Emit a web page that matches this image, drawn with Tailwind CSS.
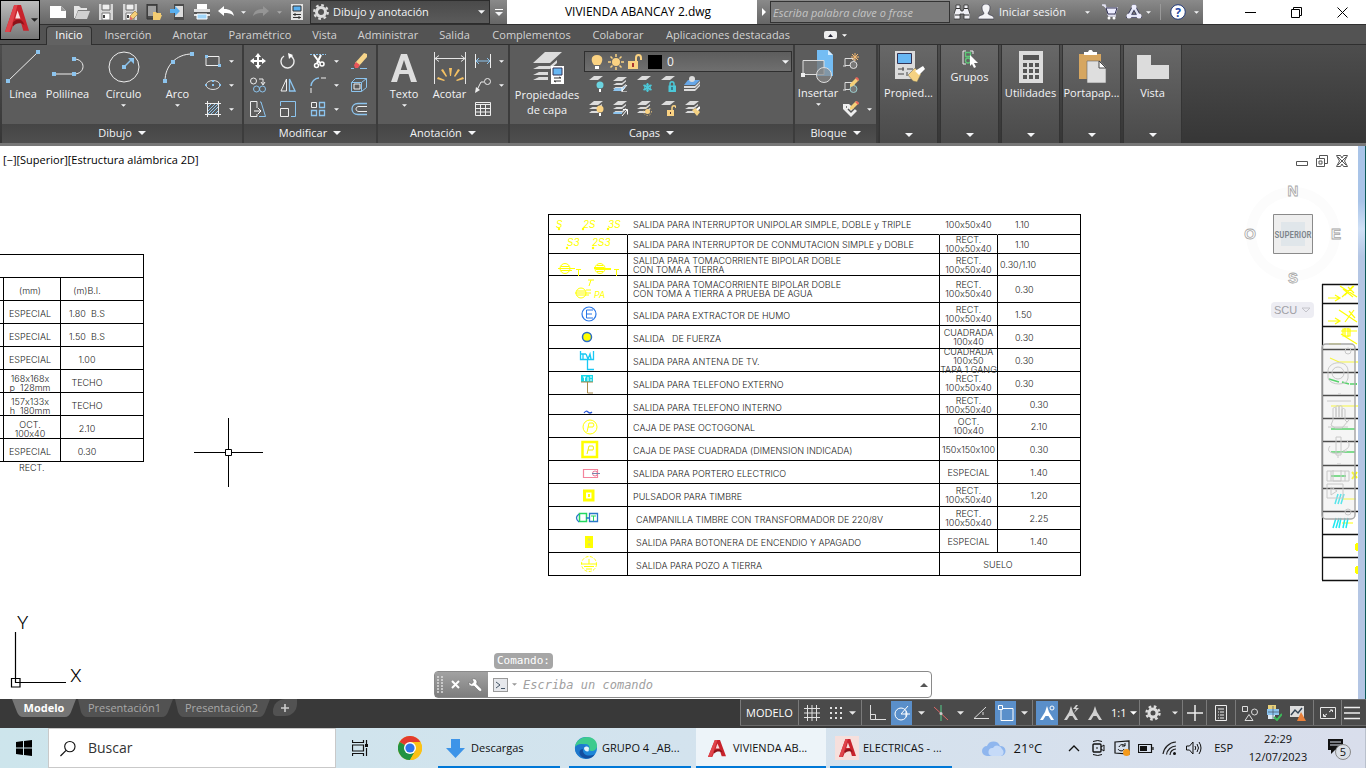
<!DOCTYPE html>
<html lang="es">

<head>
  <meta charset="UTF-8">
  <meta name="viewport" content="width=device-width, initial-scale=1.0">
  <title>VIVIENDA ABANCAY 2.dwg</title>
  <script src="https://cdn.jsdelivr.net/npm/@tailwindcss/browser@4"></script>
</head>

<body class="h-screen flex flex-col overflow-hidden bg-white font-['Open_Sans','Noto_Sans',sans-serif] text-[11px] leading-4 text-gray-100">

  <!-- Shared icon shapes -->
  <svg class="hidden">
    <symbol id="caret" viewBox="0 0 8 4"><path d="M0 0h8l-4 4z" fill="currentColor" /></symbol>
    <symbol id="layers" viewBox="0 0 16 16"><path d="M6 1h9l-5 4H1zM4.500 7H10l4-3v1.500L10 9H1zM3.500 11H10l4-3v1.500L10 13H1z" fill="#dcdcdc" /></symbol>
    <symbol id="layer" viewBox="0 0 16 16"><path d="M6 2h9l-5 4H1z" fill="#dcdcdc" /></symbol>
    <symbol id="acad" viewBox="1 2 21 20" preserveAspectRatio="none"><path d="M9 2h6l7 19h-5l-2-6H9l-3 7H1z" fill="#c8232c" /><path d="M12 6l2.500 6H10z" fill="#f7dede" /><path d="M9 2h3L8 14l-3 8H1z" fill="#e0444b" /><path d="M8 15c3-3 7-3 9 0l1 2c-3-2-7-2-10 1z" fill="#8e1219" /></symbol>
    <symbol id="floppy" viewBox="0 0 16 16"><path d="M1 0h14v16H1z" fill="#d6d6d6" /><path d="M4 0h8v6H4z" fill="#eee" stroke="#666" /><path d="M4 9h8v7H4z" fill="#fff" stroke="#777" /><path d="M5 11h2v3H5z" fill="#444" /></symbol>
    <symbol id="compass" viewBox="0 0 16 16"><path d="M8 1L10 7l5 8h-3L9.500 11H6.500L4 15H1l5-8z" fill="currentColor" /></symbol>
  </svg>

  <!-- Title bar -->
  <header class="relative flex h-6 shrink-0 bg-gradient-to-b from-[#8a8a8a] to-[#666]">
    <button class="absolute left-0 top-0 z-10 flex h-10 w-10 items-center gap-[2px] border border-black bg-gradient-to-b from-[#bdbdbd] to-[#777] pb-1 pl-1" aria-label="Menú de aplicación">
      <svg class="h-[27px] w-6"><use href="#acad" /></svg>
      <svg class="mt-1 h-1 w-[7px] text-[#222]"><use href="#caret" /></svg>
    </button>

    <div class="flex w-[310px] shrink-0 items-center pl-[46px]">
      <button class="flex w-6 justify-center" aria-label="Nuevo"><svg class="h-4 w-4" viewBox="0 0 16 16"><path d="M0 2h11l5 5v7H0z" fill="#fff" /><path d="M11 2v5h5z" fill="#999" /></svg></button>
      <button class="flex w-6 justify-center" aria-label="Abrir"><svg class="h-4 w-4" viewBox="0 0 16 16"><path d="M0 2h5l2 2h6v2H4L1 14H0z" fill="#e5e5e5" /><path d="M4 7h12l-3 8H1z" fill="#d0d0d0" /></svg></button>
      <button class="flex w-6 justify-center" aria-label="Guardar"><svg class="h-4 w-4"><use href="#floppy" /></svg></button>
      <button class="flex w-6 justify-center" aria-label="Guardar como"><svg class="h-4 w-4" viewBox="0 0 16 16"><use href="#floppy" /><path d="M8 12l5-5 3 3-5 5-3 1z" fill="#f5cf78" stroke="#7c5a20" stroke-width=".5" /><path d="M8 12l3 3-3 1z" fill="#d66" /></svg></button>
      <button class="flex w-6 justify-center" aria-label="Abrir desde móvil"><svg class="h-4 w-4" viewBox="0 0 16 16"><path d="M1 0h10v15H1z" fill="#4b4b4b" stroke="#333" /><path d="M2 2h8v10H2z" fill="#a0a0a0" /><path d="M7 8h3l1 1h4v2h1l-2 5H7z" fill="#f3cc72" /></svg></button>
      <button class="flex w-6 justify-center" aria-label="Guardar en móvil"><svg class="h-4 w-4" viewBox="0 0 16 16"><path d="M4 0h10v16H4z" fill="#4b4b4b" /><path d="M5 2h8v11H5z" fill="#ddd" /><path d="M0 5h5V2l5 5-5 5V9H0z" fill="#5ab0f0" /></svg></button>
      <button class="flex w-6 justify-center" aria-label="Imprimir"><svg class="h-4 w-4" viewBox="0 0 16 16"><path d="M3 0h10v5H3z" fill="#fff" /><path d="M0 5h16v7H0z" fill="#e2e2e2" /><path d="M0 8h16v2H0z" fill="#555" /><path d="M3 10h10v5H3z" fill="#9fd4f7" stroke="#fff" /></svg></button>
      <button class="flex w-6 justify-center" aria-label="Deshacer"><svg class="h-4 w-4" viewBox="0 0 16 16"><path d="M0 7l6-5v3c6 0 9 2 10 7-3-3-6-3-10-3v3z" fill="#fff" /></svg></button>
      <button class="flex w-[11px] justify-center" aria-label="Historial deshacer"><svg class="h-[3px] w-[5px]"><use href="#caret" /></svg></button>
      <button class="flex w-6 justify-center" aria-label="Rehacer"><svg class="h-4 w-4" viewBox="0 0 16 16"><path d="M16 7l-6-5v3C4 5 1 7 0 12c3-3 6-3 10-3v3z" fill="#959595" /></svg></button>
      <button class="flex w-3 justify-center text-[#aaa]" aria-label="Historial rehacer"><svg class="h-[3px] w-[5px]"><use href="#caret" /></svg></button>
      <button class="flex w-6 justify-center" aria-label="Propiedades"><svg class="h-4 w-4" viewBox="0 0 16 16"><path d="M2 0h12v16H2z" fill="#e3e3e3" /><path d="M4 2h8v5H4z" fill="#5ab0f0" stroke="#333" /><path d="M4 10.500h8M4 13.500h8M6 9v3M10 12v3" stroke="#333" /></svg></button>
    </div>

    <div class="relative flex w-[180px] shrink-0 items-center border border-[#2c2c2c] bg-gradient-to-b from-[#4a4a4a] to-[#5b5b5b]">
      <svg class="ml-[2px] h-4 w-4" viewBox="0 0 16 16"><circle cx="8" cy="8" r="4.500" fill="none" stroke="#ddd" stroke-width="3" /><circle cx="8" cy="8" r="6.800" fill="none" stroke="#ddd" stroke-width="2.200" stroke-dasharray="2.700 2.640" /></svg>
      <select class="h-full flex-1 appearance-none bg-transparent pl-1 outline-none" aria-label="Espacio de trabajo"><option>Dibujo y anotación</option></select>
      <svg class="pointer-events-none absolute right-1 h-1 w-[7px]"><use href="#caret" /></svg>
    </div>
    <button class="flex w-[17px] shrink-0 flex-col items-center justify-center gap-[2px]" aria-label="Personalizar"><span class="h-px w-2 bg-white"></span><svg class="h-1 w-2"><use href="#caret" /></svg></button>

    <h1 class="flex flex-1 items-center justify-center bg-white pl-3 text-xs text-black">VIVIENDA ABANCAY 2.dwg</h1>

    <div class="flex w-[446px] shrink-0 items-center">
      <button class="flex w-[13px] justify-center" aria-label="Contraer"><svg class="h-2 w-1" viewBox="0 0 4 8"><path d="M0 0l4 4-4 4z" fill="#fff" /></svg></button>
      <input class="h-[22px] w-[180px] border border-[#333] bg-[#7b7b7b] px-[2px] italic outline-none placeholder:text-[#c4c4c4]" aria-label="Buscar ayuda" placeholder="Escriba palabra clave o frase">
      <button class="flex w-6 justify-center" aria-label="Buscar"><svg class="h-4 w-4" viewBox="0 0 16 16"><path d="M2 1h4v3l1 3h2l1-3V1h4v3l2 6v5h-6v-5H6v5H0v-5l2-6z" fill="#f0f0f5" stroke="#333" stroke-width=".8" /><path d="M2 4.500h4M10 4.500h4M1 11h5M10 11h5" stroke="#333" /></svg></button>
      <button class="flex flex-1 items-center gap-[5px] pl-1" aria-label="Iniciar sesión">
        <svg class="h-4 w-4" viewBox="0 0 16 16"><path d="M8 0c6 0 4 7 2 9 0 3 6 1 6 6H0c0-5 6-3 6-6-2-2-4-9 2-9z" fill="#f3f3f6" stroke="#334" stroke-width=".6" /></svg>
        <span class="whitespace-nowrap">Iniciar sesión</span>
      </button>
      <svg class="mr-3 h-[3px] w-[5px]"><use href="#caret" /></svg>
      <button aria-label="Tienda"><svg class="h-4 w-4" viewBox="0 0 16 16"><path d="M0 1h3l1 3h11l-2 6H6l1 2h7" fill="#e8eaf5" stroke="#dde" stroke-width="1.500" /><path d="M4 4h11l-2 6H6z" fill="#eef" stroke="#335" /><circle cx="7" cy="14" r="1.500" fill="#fff" /><circle cx="12" cy="14" r="1.500" fill="#fff" /></svg></button>
      <button class="ml-2 flex items-center gap-1" aria-label="Autodesk App"><svg class="h-4 w-4" viewBox="0 0 16 16"><path d="M8 3L3 12h10z" fill="none" stroke="#335" stroke-width="4" /><path d="M8 3L3 12h10z" fill="none" stroke="#dfe3f2" stroke-width="2.500" /><circle cx="8" cy="3" r="2.500" fill="#eef" /><circle cx="3" cy="12" r="2.500" fill="#eef" /><circle cx="13" cy="12" r="2.500" fill="#eef" /></svg><svg class="h-[3px] w-[5px]"><use href="#caret" /></svg></button>
      <span class="mx-[9px] h-4 w-px bg-[#999]"></span>
      <button class="flex items-center gap-2 pr-1" aria-label="Ayuda"><svg class="h-4 w-4" viewBox="0 0 16 16"><circle cx="8" cy="8" r="7.300" fill="#fff" stroke="#223a7a" /><text x="8" y="12.500" text-anchor="middle" font-size="12" font-weight="700" fill="#2348a8">?</text></svg><svg class="h-[3px] w-[5px]"><use href="#caret" /></svg></button>
    </div>

    <div class="flex w-[163px] shrink-0 items-center bg-white pl-6 text-black">
      <button class="flex w-[46px] justify-center" aria-label="Minimizar"><svg class="h-[11px] w-[11px]" viewBox="0 0 11 11"><path d="M0 5.500h11" stroke="#000" /></svg></button>
      <button class="flex w-[46px] justify-center" aria-label="Restaurar"><svg class="h-[11px] w-[11px]" viewBox="0 0 11 11"><path d="M.5 2.500h8v8h-8zM2.500 2.500v-2h8v8h-2" fill="none" stroke="#000" /></svg></button>
      <button class="flex w-[46px] justify-center" aria-label="Cerrar"><svg class="h-[11px] w-[11px]" viewBox="0 0 11 11"><path d="M.5.5l10 10M10.500.5l-10 10" stroke="#000" /></svg></button>
    </div>
  </header>

  <!-- Ribbon tabs -->
  <nav class="flex h-[21px] shrink-0 items-end border-b border-t border-[#2f2f2f] bg-[#535353] pl-[46px] leading-[18px] text-[#d2d2d2]">
    <button class="-mb-px h-[19px] w-[46px] rounded-t-sm border border-b-0 border-[#2f2f2f] bg-[#626262] pb-[2px] leading-4 text-white">Inicio</button>
    <button class="w-[72px]">Inserción</button>
    <button class="w-[52px]">Anotar</button>
    <button class="w-[88px]">Paramétrico</button>
    <button class="w-[41px]">Vista</button>
    <button class="w-[86px]">Administrar</button>
    <button class="w-[47px]">Salida</button>
    <button class="w-[107px]">Complementos</button>
    <button class="w-[66px]">Colaborar</button>
    <button class="w-[154px]">Aplicaciones destacadas</button>
    <button class="ml-[19px] flex h-[18px] items-center gap-[5px]" aria-label="Minimizar cinta">
      <svg class="h-2 w-[13px]" viewBox="0 0 13 8"><rect width="13" height="8" rx="2" fill="#eee" /><path d="M4 6l2.500-3L9 6z" fill="#223" /></svg>
      <svg class="h-[3px] w-[5px] text-white"><use href="#caret" /></svg>
    </button>
  </nav>

  <!-- Ribbon panels -->
  <div class="flex h-[101px] shrink-0 border-b-[3px] border-[#777] bg-gradient-to-b from-[#4d4d4d] to-[#363636] pl-[2px]">

    <section class="flex w-[242px] flex-col border-r-2 border-[#3c3c3c] bg-[#5c5c5c]">
      <div class="flex flex-1 pl-[5px] pt-1">
        <button class="flex w-8 flex-col items-center"><svg class="mb-px h-9 w-9 shrink-0" viewBox="0 0 36 36"><path d="M3 32L33 3" stroke="#eee" /><path d="M1 30h4v4H1zM31 1h4v4h-4z" fill="#8cc4ee" /></svg>Línea</button>
        <button class="flex w-[57px] flex-col items-center"><svg class="mb-px h-9 w-9 shrink-0" viewBox="0 0 36 36"><path d="M4 25h20c12 0 12-15 0-15" fill="none" stroke="#eee" /><path d="M2 23h4v4H2zM22 23h4v4h-4zM22 8h4v4h-4z" fill="#8cc4ee" /></svg>Polilínea</button>
        <button class="flex w-[55px] flex-col items-center"><svg class="mb-px h-9 w-9 shrink-0" viewBox="0 0 36 36"><circle cx="18" cy="18" r="15" fill="none" stroke="#eee" /><path d="M18 18l8-8" stroke="#8cc4ee" stroke-width="1.500" /><path d="M22 9h6v6zM16 16h4v4h-4z" fill="#8cc4ee" /></svg>Círculo<svg class="mt-[2px] h-[3px] w-[5px]"><use href="#caret" /></svg></button>
        <button class="flex w-[53px] flex-col items-center"><svg class="mb-px h-9 w-9 shrink-0" viewBox="0 0 36 36"><path d="M5 32C5 17 16 5 32 5" fill="none" stroke="#eee" /><path d="M3 30h4v4H3zM11 11h4v4h-4zM30 3h4v4h-4z" fill="#8cc4ee" /></svg>Arco<svg class="mt-[2px] h-[3px] w-[5px]"><use href="#caret" /></svg></button>
        <div class="flex flex-col pl-px">
          <button class="flex h-6 items-center gap-2" aria-label="Rectángulo"><svg class="h-4 w-4" viewBox="0 0 16 16"><path d="M1 3.500h13v9H1z" fill="none" stroke="#eee" /><path d="M0 2h3v3H0zM13 11h3v3h-3z" fill="#8cc4ee" /></svg><svg class="h-[3px] w-[5px]"><use href="#caret" /></svg></button>
          <button class="flex h-6 items-center gap-2" aria-label="Elipse"><svg class="h-4 w-4" viewBox="0 0 16 16"><ellipse cx="8" cy="8" rx="7" ry="4.500" fill="none" stroke="#ddd" /><path d="M7 7h2v2H7zM0 7h2v2H0zM14 7h2v2h-2zM7 3h2v2H7z" fill="#8cc4ee" /></svg><svg class="h-[3px] w-[5px]"><use href="#caret" /></svg></button>
          <button class="flex h-6 items-center gap-2" aria-label="Sombreado"><svg class="h-4 w-4" viewBox="0 0 16 16"><path d="M3 6l3-3M3 10l7-7M3 13L13 3M6 13l7-7M10 13l3-3" stroke="#8cc4ee" /><path d="M2.500 0v16M13.500 0v16M0 2.500h16M0 13.500h16" stroke="#eee" /></svg><svg class="h-[3px] w-[5px]"><use href="#caret" /></svg></button>
        </div>
      </div>
      <button class="flex h-[19px] items-center justify-center gap-[6px] bg-gradient-to-b from-[#454545] to-[#4f4f4f] pb-px">Dibujo<svg class="h-1 w-2"><use href="#caret" /></svg></button>
    </section>

    <section class="flex w-[134px] flex-col border-r-2 border-[#3c3c3c] bg-[#5c5c5c]">
      <div class="grid flex-1 grid-cols-[30px_30px_41px_16px] content-start pl-[6px] pt-1">
        <button class="flex h-6 items-center" aria-label="Desplazar"><svg class="h-4 w-4" viewBox="0 0 16 16"><path d="M8 0l3 4H9v3h3V5l4 3-4 3V9H9v3h2l-3 4-3-4h2V9H4v2L0 8l4-3v2h3V4H5z" fill="#fff" /></svg></button>
        <button class="flex h-6 items-center" aria-label="Girar"><svg class="h-4 w-4" viewBox="0 0 16 16"><path d="M10 2.500A6.500 6.500 0 1 1 4 3" fill="none" stroke="#eee" stroke-width="1.400" /><path d="M8 0l5 2-4 4z" fill="#fff" /></svg></button>
        <button class="flex h-6 items-center gap-2" aria-label="Recortar"><svg class="h-4 w-4" viewBox="0 0 16 16"><path d="M0 1.500h16" stroke="#8cc4ee" stroke-dasharray="2 1" /><path d="M4 2l6 8M11 2L7 10" stroke="#fff" stroke-width="2" /><circle cx="6.500" cy="12.500" r="2" fill="none" stroke="#fff" stroke-width="1.500" /><circle cx="12" cy="11" r="2" fill="none" stroke="#fff" stroke-width="1.500" /></svg><svg class="h-[3px] w-[5px]"><use href="#caret" /></svg></button>
        <button class="flex h-6 items-center" aria-label="Borrar"><svg class="h-4 w-4" viewBox="0 0 16 16"><path d="M0 15.500h3M9 15.500h7" stroke="#8cc4ee" /><path d="M13 0l3 1v3l-8 9-4-3z" fill="#f7d58a" /><path d="M5 9l4 3-2 3H4l-1-3z" fill="#e8555a" /></svg></button>
        <button class="flex h-6 items-center" aria-label="Copiar"><svg class="h-4 w-4" viewBox="0 0 16 16"><circle cx="3.500" cy="4" r="3" fill="none" stroke="#eee" /><path d="M9 2h4v5M11 5l2 3 2-3" fill="none" stroke="#eee" /><circle cx="6.500" cy="12" r="3" fill="none" stroke="#8cc4ee" /><circle cx="12.500" cy="12" r="3" fill="none" stroke="#8cc4ee" /></svg></button>
        <button class="flex h-6 items-center" aria-label="Simetría"><svg class="h-4 w-4" viewBox="0 0 16 16"><path d="M6.500 2v12H1z" fill="none" stroke="#eee" /><path d="M9.500 2v12H15z" fill="none" stroke="#8cc4ee" stroke-width="1.300" /></svg></button>
        <button class="flex h-6 items-center gap-2" aria-label="Empalme"><svg class="h-4 w-4" viewBox="0 0 16 16"><path d="M1 16v-5M11 1h5" stroke="#eee" /><path d="M1 9c0-4 4-8 8-8" fill="none" stroke="#8cc4ee" stroke-width="1.400" /></svg><svg class="h-[3px] w-[5px]"><use href="#caret" /></svg></button>
        <button class="flex h-6 items-center" aria-label="Descomponer"><svg class="h-4 w-4" viewBox="0 0 16 16"><path d="M.5 5.500h10v9H.5z" fill="none" stroke="#8cc4ee" /><path d="M3 7h6v5H3z" fill="none" stroke="#eee" /><path d="M.5 5.500l4-4h11v9l-5 4M10.500 5.500l5-4" fill="none" stroke="#8cc4ee" /></svg></button>
        <button class="flex h-6 items-center" aria-label="Estirar"><svg class="h-4 w-4" viewBox="0 0 16 16"><path d="M7 7V.5H.5v15H7V13" fill="none" stroke="#eee" /><path d="M10 1h1l4.500 14.500H9" fill="none" stroke="#8cc4ee" /><path d="M4 10h6M8 7l3 3-3 3" fill="none" stroke="#fff" /></svg></button>
        <button class="flex h-6 items-center" aria-label="Escala"><svg class="h-4 w-4" viewBox="0 0 16 16"><path d="M.5 5V.5h15v15H11" fill="none" stroke="#8cc4ee" /><path d="M.5 7.500h8v8h-8z" fill="none" stroke="#eee" /></svg></button>
        <button class="flex h-6 items-center gap-2" aria-label="Matriz"><svg class="h-4 w-4" viewBox="0 0 16 16"><path d="M1.500 1.500h5v5h-5z" fill="none" stroke="#eee" /><path d="M9.500 1.500h5v5h-5zM1.500 9.500h5v5h-5zM9.500 9.500h5v5h-5z" fill="none" stroke="#8cc4ee" stroke-width="1.300" /></svg><svg class="h-[3px] w-[5px]"><use href="#caret" /></svg></button>
        <button class="flex h-6 items-center" aria-label="Desfase"><svg class="h-4 w-4" viewBox="0 0 16 16"><path d="M16 2.500H7c-8 0-8 11 0 11h9" fill="none" stroke="#8cc4ee" stroke-width="1.300" /><path d="M16 5.500H8c-4 0-4 5 0 5h8" fill="none" stroke="#eee" /></svg></button>
      </div>
      <button class="flex h-[19px] items-center justify-center gap-[6px] bg-gradient-to-b from-[#454545] to-[#4f4f4f] pb-px">Modificar<svg class="h-1 w-2"><use href="#caret" /></svg></button>
    </section>

    <section class="flex w-[132px] flex-col border-r-2 border-[#3c3c3c] bg-[#5c5c5c]">
      <div class="flex flex-1 pl-1 pt-1">
        <button class="flex w-[44px] flex-col items-center"><svg class="mb-px h-9 w-9 shrink-0" viewBox="0 0 36 36"><path d="M15 5h6l10 28h-6l-2.500-8h-9L11 33H5zM18 11l-3.300 10h6.600z" fill="#dedede" fill-rule="evenodd" /></svg>Texto<svg class="mt-[2px] h-[3px] w-[5px]"><use href="#caret" /></svg></button>
        <button class="flex w-[47px] flex-col items-center"><svg class="mb-px h-9 w-9 shrink-0" viewBox="0 0 36 36"><path d="M2.500 3v32M33.500 3v32M3 9.500h30M7 6.500l-4 3 4 3M29 6.500l4 3-4 3" fill="none" stroke="#e6e6e6" /><path d="M17 19h3l-1 8h-1zM9 21l2-1 4 7-1 1zM28 21l-2-1-4 7 1 1zM5 30l1-2 7 3-1 1zM32 30l-1-2-7 3 1 1z" fill="#f5c163" /></svg>Acotar</button>
        <div class="flex flex-col pl-[2px]">
          <button class="flex h-6 items-center gap-2" aria-label="Lineal"><svg class="h-4 w-4" viewBox="0 0 16 16"><path d="M.5 1v14M15.500 1v14" stroke="#eee" /><path d="M1 8h14M4 5L1 8l3 3M12 5l3 3-3 3" fill="none" stroke="#8cc4ee" /></svg><svg class="h-[3px] w-[5px]"><use href="#caret" /></svg></button>
          <button class="flex h-6 items-center gap-2" aria-label="Directriz"><svg class="h-4 w-4" viewBox="0 0 16 16"><circle cx="12.500" cy="4.500" r="3" fill="none" stroke="#eee" /><path d="M9 5H6l-4 8" fill="none" stroke="#eee" /><path d="M0 16l1-6 4 3z" fill="#eee" /></svg><svg class="h-[3px] w-[5px]"><use href="#caret" /></svg></button>
          <button class="flex h-6 items-center" aria-label="Tabla"><svg class="h-4 w-4" viewBox="0 0 16 16"><path d="M.5 1.500h15v13H.5zM.5 3.500h15M.5 7.500h15M.5 11h15M5.500 4v11M10.500 4v11" fill="none" stroke="#eee" /></svg></button>
        </div>
      </div>
      <button class="flex h-[19px] items-center justify-center gap-[6px] bg-gradient-to-b from-[#454545] to-[#4f4f4f] pb-px">Anotación<svg class="h-1 w-2"><use href="#caret" /></svg></button>
    </section>

    <section class="flex w-[285px] flex-col border-r-2 border-[#3c3c3c] bg-[#5c5c5c]">
      <div class="flex flex-1 pt-1">
        <button class="flex w-[74px] flex-col items-center leading-[15px]"><svg class="mb-[2px] h-9 w-9 shrink-0" viewBox="0 0 36 36"><path d="M16 3h17L21 14H4zM10 17h11l7-6v3l-7 6H4zM10 23h9v3H4zM10 28h9v3H4z" fill="#dcdcdc" /><path d="M22 17h13v18H22z" fill="#fff" /><path d="M24 19h9v7h-9z" fill="#67b7f3" stroke="#335" /><path d="M25 29h7l-2-1M32 32h-7l2 1" fill="none" stroke="#333" /></svg>Propiedades<br>de capa</button>
        <div class="flex flex-col">
          <div class="relative mb-[2px] mt-[2px] flex h-[21px] w-[208px] items-center gap-[3px] border border-[#2f2f2f] bg-gradient-to-b from-[#5d5d5d] to-[#6f6f6f] pl-1">
            <svg class="h-4 w-4" viewBox="0 0 16 16"><path d="M8 1c7 0 6 7 3 10H5C2 8 1 1 8 1z" fill="#fad282" /><path d="M6 12h4v3H6z" fill="#fff" /></svg>
            <svg class="h-4 w-4" viewBox="0 0 16 16"><circle cx="8" cy="8" r="4" fill="#fad282" /><path d="M8 0v3M8 13v3M0 8h3M13 8h3M2.500 2.500l2 2M11.500 11.500l2 2M2.500 13.500l2-2M11.500 4.500l2-2" stroke="#fad282" stroke-width="1.500" /></svg>
            <svg class="h-4 w-4" viewBox="0 0 16 16"><path d="M9 7V4c0-4 5-4 5 0v2" fill="none" stroke="#fad282" stroke-width="2" /><path d="M1 7h10v8H1z" fill="#fad282" /><path d="M5 9h2v4H5z" fill="#a33" /></svg>
            <span class="ml-[2px] h-[14px] w-[14px] bg-black"></span>
            <select class="h-full flex-1 appearance-none bg-transparent pl-[2px] text-xs outline-none" aria-label="Capa"><option>0</option></select>
            <svg class="pointer-events-none absolute right-[2px] h-1 w-[7px]"><use href="#caret" /></svg>
          </div>
          <div class="flex gap-2 pl-1">
            <button class="flex h-5 w-4 items-center" aria-label="Desactivar"><svg class="h-4 w-4" viewBox="0 0 16 16"><use href="#layer" y="-2" /><circle cx="12" cy="9" r="3.500" fill="#6bd4e0" /><path d="M11 13h2v3h-2z" fill="#fff" /></svg></button>
            <button class="flex h-5 w-4 items-center" aria-label="Aislar"><svg class="h-4 w-4" viewBox="0 0 16 16"><use href="#layers" /><path d="M3 12h7l3-2v2l-3 3H1z" fill="#8cc4ee" /><path d="M15 9l-5 6M10 11v5h5" fill="none" stroke="#fff" /></svg></button>
            <button class="flex h-5 w-4 items-center" aria-label="Inutilizar"><svg class="h-4 w-4" viewBox="0 0 16 16"><use href="#layer" y="-2" /><path d="M11.500 7v9M7.500 9l8 5M15.500 9l-8 5" stroke="#4cc8d8" stroke-width="1.600" /><circle cx="11.500" cy="11.500" r="3" fill="none" stroke="#4cc8d8" /></svg></button>
            <button class="flex h-5 w-4 items-center" aria-label="Bloquear"><svg class="h-4 w-4" viewBox="0 0 16 16"><use href="#layer" y="-2" /><path d="M10 10V8c0-3 4-3 4 0v2" fill="none" stroke="#4cc8d8" stroke-width="1.500" /><path d="M8.500 9.500H16V16H8.500z" fill="#4cc8d8" /><path d="M12 11v3" stroke="#234" /></svg></button>
            <button class="flex h-5 w-4 items-center" aria-label="Definir actual"><svg class="h-4 w-4" viewBox="0 0 16 16"><path d="M4 4h12l-5 5H0z" fill="#67a7e8" /><path d="M0 10h11l5-5v2l-5 5H0zM0 13h11l5-5v2l-5 5H0z" fill="#dcdcdc" /><circle cx="8" cy="3" r="3" fill="#ddd" /></svg></button>
          </div>
          <div class="mt-1 flex gap-2 pl-1">
            <button class="flex h-5 w-4 items-center" aria-label="Activar todas"><svg class="h-4 w-4" viewBox="0 0 16 16"><use href="#layers" /><circle cx="12" cy="9" r="3.500" fill="#fad282" /><path d="M11 13h2v3h-2z" fill="#fff" /></svg></button>
            <button class="flex h-5 w-4 items-center" aria-label="Anular aislamiento"><svg class="h-4 w-4" viewBox="0 0 16 16"><use href="#layers" /><path d="M2 12h8v2H1z" fill="#8cc4ee" /><path d="M10 16l5-6M11 9.500h4.500v5" fill="none" stroke="#fff" /></svg></button>
            <button class="flex h-5 w-4 items-center" aria-label="Reutilizar"><svg class="h-4 w-4" viewBox="0 0 16 16"><use href="#layers" /><circle cx="11.500" cy="11.500" r="2.500" fill="#fad282" /><circle cx="11.500" cy="11.500" r="4" fill="none" stroke="#fad282" stroke-dasharray="1 2" /></svg></button>
            <button class="flex h-5 w-4 items-center" aria-label="Desbloquear"><svg class="h-4 w-4" viewBox="0 0 16 16"><use href="#layer" y="-1" /><path d="M12 10V8c0-3 4-3 4 0" fill="none" stroke="#fad282" stroke-width="1.500" /><path d="M7 10h7v6H7z" fill="#fad282" /><path d="M10.500 12v2" stroke="#533" /></svg></button>
            <button class="flex h-5 w-4 items-center" aria-label="Igualar capa"><svg class="h-4 w-4" viewBox="0 0 16 16"><use href="#layers" /><path d="M8 10l4-2 4 4-3 4z" fill="#f5d283" /><path d="M13 10l3-3" stroke="#fff" stroke-width="2" /></svg></button>
          </div>
        </div>
      </div>
      <button class="flex h-[19px] items-center justify-center gap-[6px] bg-gradient-to-b from-[#454545] to-[#4f4f4f] pb-px">Capas<svg class="h-1 w-2"><use href="#caret" /></svg></button>
    </section>

    <section class="flex w-[83px] flex-col border-r-2 border-[#3c3c3c] bg-[#5c5c5c]">
      <div class="flex flex-1 pt-1">
        <button class="flex w-[46px] flex-col items-center"><svg class="h-9 w-9 shrink-0" viewBox="0 0 36 36"><path d="M17 1h11l5 5v21H17z" fill="#74bdf4" /><path d="M28 1v5h5" fill="#d4ecff" /><path d="M3 11.500h21v14H3z" fill="#777" fill-opacity=".8" stroke="#ddd" /><circle cx="24" cy="26" r="7.500" fill="#888" fill-opacity=".7" stroke="#ddd" /><path d="M1 24h4v4H1z" fill="#eee" /></svg>Insertar<svg class="mt-[2px] h-[3px] w-[5px]"><use href="#caret" /></svg></button>
        <div class="flex flex-col pl-[2px]">
          <button class="flex h-6 items-center" aria-label="Crear bloque"><svg class="h-4 w-4" viewBox="0 0 16 16"><path d="M2 5.500h9v7H2zM0 13h3" fill="none" stroke="#ddd" /><circle cx="10.500" cy="12" r="3.500" fill="#777" stroke="#ddd" /><path d="M12 0v8M8 4h8M9 1l6 6M15 1L9 7" stroke="#f3b871" /></svg></button>
          <button class="flex h-6 items-center" aria-label="Editar bloque"><svg class="h-4 w-4" viewBox="0 0 16 16"><path d="M2 5.500h9v7H2zM0 13h3" fill="none" stroke="#ddd" /><circle cx="10.500" cy="12" r="3.500" fill="#777" stroke="#9cc" /><path d="M7 7l6-6 3 2-6 6-3 1z" fill="#f5cf78" /><path d="M12 1l2-1 2 2-1 2z" fill="#e8655a" /></svg></button>
          <button class="flex h-6 items-center gap-2" aria-label="Editar atributos"><svg class="h-4 w-4" viewBox="0 0 16 16"><path d="M0 3h6l8 7-6 6-8-8z" fill="#eee" /><path d="M3 6h1M5 8l3 3 4-4" stroke="#555" stroke-width="1.500" fill="none" /><path d="M7 6l6-6 3 2-6 6-3 1z" fill="#f5cf78" /><path d="M12 1l2-1 2 2-1 2z" fill="#e8655a" /></svg><svg class="h-[3px] w-[5px]"><use href="#caret" /></svg></button>
        </div>
      </div>
      <button class="flex h-[19px] items-center justify-center gap-[6px] bg-gradient-to-b from-[#454545] to-[#4f4f4f] pb-px">Bloque<svg class="h-1 w-2"><use href="#caret" /></svg></button>
    </section>

    <!-- Collapsed panels -->
    <div class="flex gap-[2px] pl-px">
      <button class="flex w-[59px] flex-col items-center border-x border-[#343434] bg-gradient-to-b from-[#686868] to-[#4a4a4a] pb-[6px] pt-[5px]"><svg class="h-[34px] w-8 shrink-0" viewBox="0 0 32 34"><path d="M2 1h20v28H2z" fill="#dcdcdc" /><path d="M4.500 3.500h14v10h-14z" fill="#67b7f3" stroke="#335" /><path d="M5 19h6M5 24h6M14 19h6M10 17v4M14 22v4" stroke="#444" /><path d="M15 25l7-7 6 6-4 8-4-1z" fill="#f5d283" stroke="#665" stroke-width=".5" /><path d="M22 21l8-5 2 3-6 6z" fill="#fff" /></svg><span class="leading-[18px]">Propied...</span><svg class="mt-auto h-1 w-2"><use href="#caret" /></svg></button>
      <button class="flex w-[59px] flex-col items-center border-x border-[#343434] bg-gradient-to-b from-[#686868] to-[#4a4a4a] pb-[6px] pt-[5px]"><svg class="h-[18px] w-4 shrink-0" viewBox="0 0 16 18"><path d="M4 1H1v13h3M8 1h3v3" fill="none" stroke="#eee" /><path d="M3.500 2.500h5v4h-5z" fill="none" stroke="#5ec878" stroke-width="1.300" /><circle cx="6" cy="10.500" r="2.500" fill="none" stroke="#5ec878" stroke-width="1.300" /><path d="M8 5l8 8h-4l2 4-2 1-2-4-2 2z" fill="#fff" /></svg><span class="leading-[18px]">Grupos</span><svg class="mt-auto h-1 w-2"><use href="#caret" /></svg></button>
      <button class="flex w-[59px] flex-col items-center border-x border-[#343434] bg-gradient-to-b from-[#686868] to-[#4a4a4a] pb-[6px] pt-[5px]"><svg class="h-[34px] w-8 shrink-0" viewBox="0 0 32 34"><path d="M4 1h24v32H4z" fill="#dcdcdc" /><path d="M8 5h16v5H8zM8 13h4v4H8zM14 13h4v4h-4zM20 13h4v4h-4zM8 19h4v4H8zM14 19h4v4h-4zM20 19h4v4h-4zM8 25h4v4H8zM14 25h4v4h-4zM20 25h4v4h-4z" fill="#555" /></svg><span class="leading-[18px]">Utilidades</span><svg class="mt-auto h-1 w-2"><use href="#caret" /></svg></button>
      <button class="flex w-[59px] flex-col items-center border-x border-[#343434] bg-gradient-to-b from-[#686868] to-[#4a4a4a] pb-[6px] pt-[5px]"><svg class="h-[34px] w-8 shrink-0" viewBox="0 0 32 34"><path d="M3 4h22v25H3z" fill="#d6a660" /><path d="M8 2h4c1-3 4-3 5 0h4v3H8z" fill="#fff" /><path d="M11 11h13l6 6v16H11z" fill="#dedede" stroke="#666" stroke-width=".6" /><path d="M23 11v7h7z" fill="#fff" stroke="#444" /></svg><span class="leading-[18px]">Portapap...</span><svg class="mt-auto h-1 w-2"><use href="#caret" /></svg></button>
      <button class="flex w-[59px] flex-col items-center border-x border-[#343434] bg-gradient-to-b from-[#686868] to-[#4a4a4a] pb-[6px] pt-[5px]"><svg class="h-[34px] w-8 shrink-0" viewBox="0 0 32 34"><path d="M0 5h14v10h18v14H0z" fill="#dcdcdc" /></svg><span class="leading-[18px]">Vista</span><svg class="mt-auto h-1 w-2"><use href="#caret" /></svg></button>
    </div>
  </div>

  <!-- Drawing area -->
  <main class="relative flex-1 overflow-hidden bg-white text-black">
    <div class="px-[3px] pt-[5px] leading-[18px]">[−][Superior][Estructura alámbrica 2D]</div>

    <table id="leftTable" class="absolute left-[-60px] top-[108px] w-[204px] table-fixed border-separate border-spacing-0 border-t border-black font-[Inter,sans-serif] text-[9px] font-light leading-[9px] text-[#222] [font-feature-settings:'calt'_0]">
      <colgroup><col class="w-[64px]"><col class="w-[57px]"><col class="w-[83px]"></colgroup>
      <tbody></tbody>
    </table>
    <span class="absolute left-[19px] top-[317px] font-[Inter,sans-serif] text-[9px] font-light leading-[9px] text-[#222]">RECT.</span>

    <table id="mainTable" class="absolute left-[548px] top-[68px] w-[533px] table-fixed border-separate border-spacing-0 border-l border-t border-black font-[Inter,sans-serif] text-[9px] font-light leading-[9px] text-[#222] [font-feature-settings:'calt'_0]">
      <colgroup><col class="w-[79px]"><col class="w-[312px]"><col class="w-[58px]"><col class="w-[83px]"></colgroup>
      <tbody></tbody>
    </table>

    <!-- Third legend, cut off by the window edge -->
    <svg class="absolute right-2 top-[137px] h-[300px] w-[37px]" viewBox="0 0 37 300">
      <path d="M1.500 1v296M1 1.500h36M1 20.500h36M1 43.500h36M1 66.500h36M1 89.500h36M1 112.500h36M1 135.500h36M1 158.500h36M1 182.500h36M1 205.500h36M1 228.500h36M1 251.500h36M1 274.500h36M1 297.500h36" stroke="#111" stroke-width="1.300" />
      <g stroke="#ff0" stroke-width="1.200" fill="none">
        <path d="M7 15h12M14 12l5 3-5 3M19 3l17 11M21 14L33 3M24 12l8-9M22 6l10 8M27 4l6 6" />
        <path d="M7 38h12M14 35l5 3-5 3M18 27l18 12M24 39l9-12M28 28l6 7" />
        <path d="M20 48h16M20 51l16 10M22 46h7v7h-7zM24 45v9M27 45v9M8 61h12" />
        <path d="M9 75l9 4h19M10 123h27M21 216h14M21 240h11" />
        <path d="M31 189l5 6M31 196l5-7M35 261v6M36 260v8M35 284v6M36 283v8" stroke-width="2" />
      </g>
      <path d="M8 96l10 3M21 99l7 2M29 101h7M10 146h24M10 169h24M10 193h15" stroke="#1fce3c" stroke-width="1.600" />
      <path d="M14 221l3-10M17 221l3-10M20 221l3-10M12 245l3-10M15 245l3-10M18 245l2-10M22 245l2-10M25 245l2-10" stroke="#1ee8f0" stroke-width="1.500" />
    </svg>

    <!-- Navigation bar -->
    <svg class="absolute right-[9px] top-[197px] h-[177px] w-9" viewBox="0 0 36 177" fill="none" stroke="#c8c8c8">
      <rect x="1" y="1" width="33" height="175" rx="4" fill="#ddd" fill-opacity=".3" stroke="#a8a8a8" stroke-width="1.500" />
      <circle cx="27" cy="8" r="3" /><circle cx="27" cy="169" r="3" />
      <path d="M7 28c0-10 20-12 20 0v7c0 8-18 8-20 0z" /><circle cx="17" cy="30" r="6" />
      <path d="M17 51h3M6 58h24M12 77V66c0-2 3-2 3 0v8V64c0-2 3-2 3 0v10V64c0-2 3-2 3 0v10-7c0-2 3-2 3 0v10l2 2 2-2-7 8h-7l-4-3zM7 84h20" />
      <path d="M15 94h5v18h-5zM9 103c-6 8 8 9 17 5M26 98c4 3 2 8-4 10M17 112v3M16 121h4" />
      <path d="M6 128h22v10H6zM10 128v10M24 128v10M6 141h16v14H6zM10 144l6 4-6 4zM12 127v11h8v-11" />
    </svg>

    <!-- Document window buttons -->
    <div class="absolute right-[17px] top-2 flex items-center gap-[6px]">
      <button aria-label="Minimizar dibujo"><svg class="h-[14px] w-[14px]" viewBox="0 0 14 14"><path d="M1.500 7.500h11v4h-11z" fill="#fff" stroke="#555" /></svg></button>
      <button aria-label="Restaurar dibujo"><svg class="h-[14px] w-[14px]" viewBox="0 0 14 14"><path d="M4.500 1.500h8v8h-8z" fill="#fff" stroke="#555" /><path d="M1.500 4.500h8v8h-8z" fill="#fff" stroke="#555" /><path d="M4 7h3v3H4z" fill="none" stroke="#555" /></svg></button>
      <button aria-label="Cerrar dibujo"><svg class="h-[14px] w-[14px]" viewBox="0 0 14 14"><path d="M1.500 1.500h4L7 4l1.500-2.500h4L9.500 7l3 5.500h-4L7 10l-1.500 2.500h-4l3-5.500z" fill="#fff" stroke="#555" /><path d="M3 3l8 8M11 3l-8 8" stroke="#555" /></svg></button>
    </div>

    <!-- View cube -->
    <svg class="absolute right-[25px] top-[38px] h-[104px] w-24 overflow-visible" viewBox="0 0 96 104" font-family="Liberation Sans" font-weight="700" text-anchor="middle">
      <circle cx="48" cy="50" r="42" fill="none" stroke="#fcfcfc" stroke-width="10" />
      <g font-size="15" fill="#fff" stroke="#a6a6a6" stroke-width=".8"><text x="48" y="12">N</text><text x="48" y="99">S</text><text x="5" y="55">O</text><text x="91" y="55">E</text></g>
      <path d="M28.500 30.500h39v39h-39z" fill="#eee" stroke="#8a8a8a" /><path d="M36 38h24v24H36z" fill="#e0e6ea" />
      <text x="48" y="54" font-size="9" font-family="Roboto Condensed, Open Sans Condensed, Roboto" font-weight="500" fill="#7d848a">SUPERIOR</text>
    </svg>
    <button class="absolute right-[52px] top-[156px] flex h-4 w-[43px] items-center justify-center gap-1 rounded bg-[#ededf3] font-['Liberation_Sans',sans-serif] text-[#a0a0a6]">SCU<svg class="h-2 w-[10px]" viewBox="0 0 10 8"><path d="M1 2h8L5 6z" fill="none" stroke="#c4c4ca" /></svg></button>

    <!-- Crosshair cursor -->
    <svg class="absolute left-[194px] top-[272px] h-[70px] w-[70px]" viewBox="0 0 70 70"><path d="M0 34.500h31M38 34.500h31M34.500 0v31M34.500 38v31M31.500 31.500h6v6h-6z" fill="none" stroke="#000" /></svg>

    <!-- UCS icon -->
    <svg class="absolute bottom-2 left-[10px] h-20 w-20" viewBox="0 -4 80 80" font-family="Roboto" font-size="19" font-weight="300"><path d="M5.500 17v50.500H56M1.500 63.500h8.500v8.500H1.500z" fill="none" stroke="#000" stroke-width="1.200" /><text x="7" y="14">Y</text><text x="60" y="67">X</text></svg>

    <!-- Window edge -->
    <div class="absolute inset-y-0 right-0 w-2 border-r border-[#0d5a5a] bg-gradient-to-b from-[#a9c4e8] from-10% via-[#cfe0f6] via-15% to-[#b4c6e4] to-20%"></div>

    <!-- Command line -->
    <div class="absolute bottom-px left-[434px] right-[434px] font-['DejaVu_Sans_Mono',monospace]">
      <span class="mb-[2px] ml-[60px] inline-block h-4 rounded-sm bg-[#a6a6a6] px-[3px] text-[11px] leading-4 text-white">Comando:</span>
      <div class="flex h-[27px] items-center rounded-sm border border-[#8a8a8a] bg-white">
        <div class="flex h-full w-[53px] items-center gap-2 bg-gradient-to-b from-[#a2a2a2] to-[#7d7d7d] pl-[2px]">
          <svg class="h-[18px] w-[6px]" viewBox="0 0 6 18"><path d="M1 0v18M5 0v18" stroke="#ddd" stroke-width="1.500" stroke-dasharray="2 1" /></svg>
          <button aria-label="Cerrar línea de comandos"><svg class="h-[9px] w-[9px]" viewBox="0 0 9 9"><path d="M1 1l7 7M8 1L1 8" stroke="#fff" stroke-width="2" /></svg></button>
          <button aria-label="Personalizar línea de comandos"><svg class="h-[14px] w-[14px]" viewBox="0 0 14 14"><path d="M4 1c4-1 6 2 4.500 5l5 5c1 2-1 3-2.500 2L6 8C3 9 0 7 1 4l2.500 2 2-2z" fill="#fff" stroke="#555" stroke-width=".5" /></svg></button>
        </div>
        <svg class="ml-[5px] h-[14px] w-[15px]" viewBox="0 0 15 14"><rect x=".5" y=".5" width="14" height="13" fill="#e6e8ec" stroke="#999" /><path d="M3 4l4 3-4 3M8 10.500h4" fill="none" stroke="#456" /></svg>
        <svg class="ml-1 h-[3px] w-[5px] text-[#999]"><use href="#caret" /></svg>
        <input class="h-full flex-1 pl-[6px] text-xs italic text-black outline-none placeholder:text-[#a0a0a0]" aria-label="Comando" placeholder="Escriba un comando">
        <svg class="mr-[3px] h-1 w-2 rotate-180 text-[#555]"><use href="#caret" /></svg>
      </div>
    </div>
  </main>

  <!-- Layout tabs and status bar -->
  <div class="flex h-[29px] shrink-0 items-start justify-between bg-[#393939]">
    <div class="flex pl-3 text-[#a9a9a9]">
      <button class="relative h-[18px] w-16 font-bold leading-[18px] text-white"><svg class="absolute inset-0 h-full w-full" viewBox="0 0 64 18" preserveAspectRatio="none"><path d="M0 0h64l-5 13q-2 5-6 5H11q-4 0-6-5z" fill="#757575" /></svg><span class="relative">Modelo</span></button>
      <button class="relative h-[18px] w-[97px] leading-[18px]"><svg class="absolute inset-0 h-full w-full" viewBox="0 0 97 18" preserveAspectRatio="none"><path d="M2 0h95l-5 13q-2 5-6 5H11q-4 0-6-5z" fill="#525252" /></svg><span class="relative">Presentación1</span></button>
      <button class="relative h-[18px] w-[97px] leading-[18px]"><svg class="absolute inset-0 h-full w-full" viewBox="0 0 97 18" preserveAspectRatio="none"><path d="M2 0h95l-5 13q-2 5-6 5H11q-4 0-6-5z" fill="#525252" /></svg><span class="relative">Presentación2</span></button>
      <button class="ml-[3px] flex h-[17px] w-6 items-center justify-center rounded-bl rounded-br-xl rounded-tl-xl bg-[#525252]" aria-label="Nueva presentación"><svg class="h-2 w-2" viewBox="0 0 8 8"><path d="M4 0v8M0 4h8" stroke="#ccc" stroke-width="1.600" /></svg></button>
    </div>
    <div class="flex h-[27px] border-y border-[#6a6a6a] bg-[#4a4a4a] text-[#e6e6e6]">
      <button class="w-[59px] border-x border-[#7a7a7a] text-white">MODELO</button>
      <div class="flex w-[63px] items-center border-r border-[#7a7a7a] pl-[5px]">
        <button aria-label="Rejilla"><svg class="h-4 w-4" viewBox="0 0 16 16"><path d="M3.500 0v16M8 0v16M12.500 0v16M0 3.500h16M0 8h16M0 12.500h16" stroke="#e0e0e0" /></svg></button>
        <button class="ml-[9px] flex items-center gap-[6px]" aria-label="Forzcursor"><svg class="h-4 w-[14px]" viewBox="0 0 14 16"><path d="M1 3h14M1 8h14M1 13h14" stroke="#e0e0e0" stroke-width="2" stroke-dasharray="2 3" /></svg><svg class="h-1 w-[7px]"><use href="#caret" /></svg></button>
      </div>
      <div class="flex w-[171px] items-center border-r border-[#7a7a7a] pl-[7px]">
        <button aria-label="Orto"><svg class="h-4 w-[17px]" viewBox="0 0 17 16"><path d="M1.500 0v14.500H17M1.500 9.500h5v5" fill="none" stroke="#ddd" /></svg></button>
        <button class="ml-[5px] flex h-6 w-[21px] items-center justify-center bg-[#5a8fca]" aria-label="Rastreo polar"><svg class="h-4 w-4" viewBox="0 0 16 16"><circle cx="7" cy="9" r="6" fill="none" stroke="#fff" /><path d="M7 9h9M7 9l7-8M12 6v6" stroke="#fff" /></svg></button>
        <svg class="ml-[6px] h-1 w-[7px]"><use href="#caret" /></svg>
        <button class="ml-2" aria-label="Isométrico"><svg class="h-4 w-4" viewBox="0 0 16 16"><path d="M1 2l14 13" stroke="#d66" /><path d="M8 0v16" stroke="#5c8" /><circle cx="8" cy="8.500" r="1.500" fill="#ccc" /></svg></button>
        <svg class="ml-2 h-1 w-[7px]"><use href="#caret" /></svg>
        <button class="ml-[9px]" aria-label="Rastreo de referencia"><svg class="h-4 w-4" viewBox="0 0 16 16"><path d="M13 2L1 13.500h15M10 7v3" fill="none" stroke="#ddd" /></svg></button>
        <button class="ml-[6px] flex h-6 w-[21px] items-center justify-center bg-[#5a8fca]" aria-label="Referencia a objetos"><svg class="h-4 w-4" viewBox="0 0 16 16"><path d="M.5.500h4v4h-4zM5 3.500h10v12H3V5" fill="none" stroke="#fff" /></svg></button>
        <svg class="ml-[5px] h-1 w-[7px]"><use href="#caret" /></svg>
      </div>
      <div class="flex w-[107px] items-center border-r border-[#7a7a7a] pl-[3px]">
        <button class="flex h-6 w-[22px] items-center justify-center bg-[#5a8fca] text-white" aria-label="Visibilidad de anotación"><svg class="h-4 w-4" viewBox="0 0 16 16"><use href="#compass" /><circle cx="13" cy="3" r="2" fill="none" stroke="#fff" /></svg></button>
        <button class="ml-[5px] text-[#d0d0d0]" aria-label="Escala automática"><svg class="h-4 w-4" viewBox="0 0 16 16"><use href="#compass" /><path d="M13 0l-3 4h3l-2 4 5-5h-3l2-3z" fill="#d0d0d0" /></svg></button>
        <button class="ml-2 text-[#d0d0d0]" aria-label="Escala de anotación"><svg class="h-4 w-4"><use href="#compass" /></svg></button>
        <button class="ml-2 flex items-center gap-1 text-white">1:1<svg class="h-1 w-[7px]"><use href="#caret" /></svg></button>
      </div>
      <button class="flex w-[43px] items-center justify-center gap-[11px] border-r border-[#7a7a7a]" aria-label="Espacio de trabajo"><svg class="h-4 w-4" viewBox="0 0 16 16"><circle cx="8" cy="8" r="4" fill="none" stroke="#ddd" stroke-width="3" /><circle cx="8" cy="8" r="6.500" fill="none" stroke="#ddd" stroke-width="2.400" stroke-dasharray="2.600 2.500" /></svg><svg class="h-1 w-[6px]"><use href="#caret" /></svg></button>
      <button class="flex w-6 items-center justify-center border-r border-[#7a7a7a]" aria-label="Supervisor de anotación"><svg class="h-4 w-4" viewBox="0 0 16 16"><path d="M8 0v16M0 8h16" stroke="#eee" stroke-width="1.500" /></svg></button>
      <button class="flex w-[29px] items-center justify-center border-r border-[#7a7a7a]" aria-label="Propiedades rápidas"><svg class="h-4 w-3" viewBox="0 0 12 16"><path d="M.5.500h11v15H.5zM3 4h6M3 7h1M5 7h4M3 10h1M5 10h4M3 13h1M5 13h4" fill="none" stroke="#eee" /></svg></button>
      <div class="flex w-[78px] items-center gap-2 border-r border-[#7a7a7a] pl-[6px]">
        <button aria-label="Aislar objetos"><svg class="h-4 w-4" viewBox="0 0 16 16"><path d="M.5 1.500h5v5h-5zM3 15.500l4-6 4 6z" fill="none" stroke="#ddd" /><circle cx="12.500" cy="7" r="3" fill="none" stroke="#ddd" /></svg></button>
        <button aria-label="Rendimiento gráfico"><svg class="h-4 w-4" viewBox="0 0 16 16"><path d="M2 0h8v4H2z" fill="#e8d07a" /><path d="M1 4h12v6H1z" fill="#8cc4ee" /><path d="M2 10h7v4H2z" fill="#dfeaf5" /><path d="M7 1v13M2 7h11" stroke="#456" stroke-width=".7" /><path d="M8 12l3 3 5-6" stroke="#3dba5a" stroke-width="2" fill="none" /></svg></button>
        <button aria-label="Aviso"><svg class="h-4 w-4" viewBox="0 0 16 16"><path d="M0 1h14v11H0z" fill="#ddd" /><path d="M1 10l4-5 3 3 4-5" stroke="#345" stroke-width="1.500" fill="none" /><path d="M11 7l5 9H7z" fill="#e8803a" /></svg></button>
      </div>
      <button class="flex w-7 items-center justify-center border-r border-[#7a7a7a]" aria-label="Limpiar pantalla"><svg class="h-3 w-4" viewBox="0 0 16 12"><path d="M.5.500h15v11H.5zM9 5l3-2M10 3h2.500v2M7 7L4 9M3.500 7v2.500H6" fill="none" stroke="#e6e6e6" /></svg></button>
      <button class="flex w-6 items-center" aria-label="Personalización"><svg class="ml-[2px] h-4 w-4" viewBox="0 0 16 16"><path d="M0 2.500h16M0 8h16M0 13.500h16" stroke="#eee" stroke-width="1.500" /></svg></button>
    </div>
  </div>

  <!-- Windows taskbar -->
  <footer class="flex h-10 shrink-0 bg-gradient-to-r from-[#cde5ec] via-[#d3e3ee] to-[#d9deec] text-[#111]">
    <button class="flex w-12 items-center justify-center" aria-label="Inicio"><svg class="h-4 w-4" viewBox="0 0 16 16"><path d="M0 2l7-1v6.500H0zM8 1l8-1v7.500H8zM0 8.500h7V15l-7-1zM8 8.500h8V16l-8-1z" fill="#000" /></svg></button>
    <label class="flex w-[288px] items-center border border-[#c9c9c9] bg-white pl-[11px]">
      <svg class="h-[17px] w-[17px]" viewBox="0 0 17 17"><circle cx="10.500" cy="6.500" r="5.500" fill="none" stroke="#111" stroke-width="1.200" /><path d="M6.500 10.500L.5 16.500" stroke="#111" stroke-width="1.300" /></svg>
      <input class="w-full pl-3 text-sm outline-none placeholder:text-[#333]" aria-label="Buscar" placeholder="Buscar">
    </label>
    <button class="flex w-12 items-center justify-center" aria-label="Vista de tareas"><svg class="h-4 w-4" viewBox="0 0 16 16"><path d="M.5 0v2.500h11V0M.5 5h11v6H.5zM.5 16v-2.500h11V16M14.500 0v4M14.500 8v8" fill="none" stroke="#111" stroke-width="1.200" /><path d="M13 4h3v3h-3z" fill="#111" /></svg></button>
    <button class="flex w-[54px] items-center justify-center pr-[3px]" aria-label="Chrome"><svg class="h-6 w-6" viewBox="0 0 24 24"><circle cx="12" cy="12" r="12" fill="#fbc116" /><path d="M12 12L1.600 6A12 12 0 0 1 22.400 6z" fill="#e33b2e" /><path d="M1.600 6A12 12 0 0 0 12 24l5.200-9L12 12z" fill="#229342" /><path d="M12 6h10.400A12 12 0 0 1 12 24l5.200-9z" fill="#fbc116" /><circle cx="12" cy="12" r="6" fill="#fff" /><circle cx="12" cy="12" r="4.600" fill="#2f74ea" /></svg></button>
    <button class="flex w-[122px] items-center gap-[6px] border-b-2 border-[#0078d7] pl-2 pt-[2px]"><svg class="h-5 w-[19px]" viewBox="0 0 19 20"><path d="M5 1h9v9h5l-9.500 10L0 10h5z" fill="#3d94e8" /></svg>Descargas</button>
    <button class="ml-[9px] flex w-[122px] items-center gap-1 border-b-2 border-[#0078d7] pl-[5px] pt-[2px]"><svg class="h-6 w-6" viewBox="0 0 24 24"><circle cx="12" cy="12" r="11" fill="#1e86d8" /><path d="M1 11C3-2 23-2 23 10c0 5-6 6-8 4 1-2 1-6-4-6-4 0-8 1-10 3z" fill="#3ecb8e" /><path d="M1 11c3-4 10-4 11 0-4 0-5 9 3 10-7 4-15-2-14-10z" fill="#1e78cc" /><path d="M9 13c-1 7 7 8 12 5-4 6-10 5-13 3-4-3-3-8 1-8z" fill="#134fa0" /><path d="M10 12c1-2 4-2 5 0 0 2-1 2 0 3-2 1-5 0-5-3z" fill="#e6f4fa" /></svg><span class="whitespace-nowrap">GRUPO 4 _AB...</span></button>
    <button class="ml-[5px] flex w-[130px] items-center gap-[7px] border-b-2 border-[#0078d7] bg-[#edf4f9] pl-3 pt-[2px]"><svg class="h-[17px] w-[18px]"><use href="#acad" /></svg><span class="whitespace-nowrap">VIVIENDA AB...</span></button>
    <button class="ml-1 flex w-[122px] items-center gap-1 border-b-2 border-[#0078d7] pl-[5px] pt-[2px]"><span class="flex h-6 w-6 items-center justify-center bg-[#f6dfdc]"><svg class="h-[18px] w-[17px]"><use href="#acad" /></svg></span><span class="whitespace-nowrap">ELECTRICAS - ...</span></button>

    <div class="ml-auto flex items-center">
      <button class="flex items-center gap-2 text-[13px]"><svg class="h-[18px] w-6" viewBox="0 0 24 18"><path d="M5 17a5 5 0 0 1 0-10 7 7 0 0 1 13 0 5 5 0 0 1 1 10z" fill="#8fb6ee" /><path d="M10 17a4 4 0 0 1 1-8 5 5 0 0 1 9 1 4 4 0 0 1-1 7z" fill="#c5daf8" /></svg>21°C</button>
      <button class="ml-[26px]" aria-label="Iconos ocultos"><svg class="h-[7px] w-3" viewBox="0 0 12 7"><path d="M1 6l5-5 5 5" fill="none" stroke="#111" stroke-width="1.300" /></svg></button>
      <button class="ml-[10px]" aria-label="Cámara"><svg class="h-4 w-4" viewBox="0 0 16 16"><path d="M3 1.500q5-2 9 0M3 14.500q5 2 9 0" fill="none" stroke="#111" /><rect x="3" y="4" width="8" height="8" rx="1" fill="none" stroke="#111" stroke-width="1.400" /><path d="M11 7l3-2v6l-3-2M7 7v2" fill="none" stroke="#111" /></svg></button>
      <button class="ml-2" aria-label="Actualización"><svg class="h-4 w-4" viewBox="0 0 16 16"><path d="M1 2l14-1v13L1 13z" fill="none" stroke="#111" stroke-width="1.200" /><path d="M5 7c1-3 5-3 6-1M11 3v3H8M10 9c-1 3-5 2-6 0" fill="none" stroke="#111" /><circle cx="12.500" cy="12.500" r="3.500" fill="#f49a1c" /></svg></button>
      <button class="ml-2" aria-label="Batería"><svg class="h-4 w-4" viewBox="0 0 16 16"><path d="M.5 4.500h13v8H.5zM15 7v3" fill="none" stroke="#111" stroke-width="1.200" /><path d="M2 6h7v5H2z" fill="#111" /></svg></button>
      <button class="ml-2" aria-label="Wi-Fi"><svg class="h-4 w-4" viewBox="0 0 16 16"><path d="M1 14A14 14 0 0 1 14 2M4.500 14.500A10 10 0 0 1 14 6M8 15a6 6 0 0 1 6-6" fill="none" stroke="#222" stroke-width="1.200" /><circle cx="12.500" cy="13.500" r="1.500" fill="#111" /></svg></button>
      <button class="ml-2" aria-label="Volumen"><svg class="h-4 w-4" viewBox="0 0 16 16"><path d="M.5 6h3l3.500-4v12l-3.500-4h-3zM9 6q1.500 2 0 4M11 4q3 4 0 8M13 2q4 6 0 12" fill="none" stroke="#111" /></svg></button>
      <button class="ml-3">ESP</button>
      <button class="ml-3 w-[66px] text-center leading-[18px]">22:29<br>12/07/2023</button>
      <button class="relative ml-4 mr-[14px] h-6 w-6" aria-label="Notificaciones"><svg class="h-6 w-6" viewBox="0 0 24 24"><path d="M1 3h15v11H8l-4 4v-4H1z" fill="#111" /><path d="M3 6h11M3 9h11" stroke="#dde3ee" /><circle cx="16" cy="16" r="7.500" fill="#dadfe6" stroke="#888" /><text x="16" y="20" font-size="11" text-anchor="middle" fill="#111">5</text></svg></button>
      <span class="h-full w-px bg-[#b9c0cc]"></span>
    </div>
  </footer>

  <script>
    // Legend symbols, drawn around the middle of each row
    const symbols = {
      s1: '<g fill="#ff0" font-size="10" font-style="italic" font-weight="400"><text x="7" y="3">S</text><text x="34" y="3">2S</text><text x="59" y="3">3S</text><circle cx="10" cy="4" r="1.200"/><circle cx="34" cy="4" r="1.200"/><circle cx="59" cy="4" r="1.200"/></g>',
      s3: '<g fill="#ff0" font-size="10" font-style="italic" font-weight="400"><text x="18" y="2">S3</text><text x="43" y="2">2S3</text><circle cx="18" cy="4" r="1.200"/><circle cx="44" cy="4" r="1.200"/></g>',
      toma: '<g fill="none" stroke="#ff0"><circle cx="16" cy="3.500" r="5"/><path d="M9 3.500h17M12 1.500h8M12 5.500h11M27 4.500h5M29.500 5v6"/><circle cx="51" cy="3.500" r="5"/><path d="M45 3.500h17M45 2.500h10M47 4.500h15M65 4.500h5M67.500 5v6M48 .5h6M48 6.500h6"/></g>',
      agua: '<g fill="none" stroke="#ff0"><circle cx="32" cy="4" r="5"/><path d="M26 4h16M28 2h8M28 6h12M39 -9h6M42 -9l-2 6M37 1h5"/></g><text x="45" y="9" font-size="9" font-style="italic" font-weight="400" fill="#ff0">PA</text>',
      humo: '<circle cx="40" cy="0" r="7" fill="none" stroke="#2a78e8" stroke-width="1.200"/><path d="M44 -4h-6.500V4H44M37.500 0H43" fill="none" stroke="#2a78e8"/>',
      fuerza: '<circle cx="38" cy="0" r="4.500" fill="#ff0" stroke="#2a6cc8" stroke-width="1.500"/>',
      tv: '<path d="M31.500 -9v8.500h13V-9M31 -6h6M34 -6v5M37 -6l2 5 2-5 1 5M38.500 0v9.500H45" fill="none" stroke="#18c8f4" stroke-width="1.300"/>',
      tel: '<path d="M32 -8h12v7H32z" fill="#18d8e8"/><path d="M34 -6h3M35.500 -6v4M39 -6v4M41 -6h2M41 -3h2" stroke="#fff"/><path d="M38.500 -1v11H44M32 -1h12" fill="none" stroke="#a88a4a"/>',
      int: '<path d="M35 8q2-3 4-1t4 0" fill="none" stroke="#2a58d8" stroke-width="1.200"/>',
      oct: '<circle cx="41" cy="1" r="7" fill="none" stroke="#ff0"/><path d="M38 6l2-9h4q2 2 0 4h-5" fill="none" stroke="#ff0"/>',
      cuad: '<path d="M33.500 -7h14.500V8H33.500z" fill="none" stroke="#ff0" stroke-width="2.500"/><path d="M38 5l2-8h4q1 2 0 4h-5" fill="none" stroke="#f0f000"/>',
      portero: '<path d="M34.500 -2.500h14v8h-14z" fill="none" stroke="#f4849c" stroke-width="1.200"/><circle cx="46" cy="1.500" r="2.500" fill="none" stroke="#e87a98"/><path d="M43 1.500h8" stroke="#78a"/>',
      timbre: '<path d="M35.500 -4h8.500v9h-8.500z" fill="none" stroke="#ff0" stroke-width="3"/><path d="M39 -1h2v3h-2z" fill="#ff0"/>',
      campana: '<path d="M30.500 -4.500h7v8h-7z" fill="none" stroke="#24d860" stroke-width="1.500"/><path d="M30 -4q-5 4 0 8M37 0h3M40.500 -4.500h8v8h-8z" fill="none" stroke="#2a78c8" stroke-width="1.300"/><path d="M42 -2h5M44.500 -2v5" stroke="#24d860"/>',
      boton: '<path d="M36 -5h8v12h-8z" fill="#ff0"/><circle cx="40" cy="-1.500" r="1.300" fill="#dd6"/><circle cx="40" cy="3.500" r="1.300" fill="#dd6"/>',
      pozo: '<circle cx="40" cy="0" r="7.500" fill="none" stroke="#ff0" stroke-dasharray="3 1.500"/><path d="M40 -5v5M33 0h14M35 2.500h10M37 5h6" stroke="#ff0"/>'
    };

    // [symbol, row height, description, box, height, height alignment]
    const mainRows = [
      ['s1', 20, 'SALIDA PARA INTERRUPTOR UNIPOLAR SIMPLE, DOBLE y TRIPLE', '100x50x40', '1.10', 'left'],
      ['s3', 19, 'SALIDA PARA INTERRUPTOR DE CONMUTACION SIMPLE y DOBLE', 'RECT.<br>100x50x40', '1.10', 'left'],
      ['toma', 22, 'SALIDA PARA TOMACORRIENTE BIPOLAR DOBLE<br>CON TOMA A TIERRA', 'RECT.<br>100x50x40', '0.30/1.10', 'edge'],
      ['agua', 27, 'SALIDA PARA TOMACORRIENTE BIPOLAR DOBLE<br>CON TOMA A TIERRA A PRUEBA DE AGUA', 'RECT.<br>100x50x40', '0.30', 'left'],
      ['humo', 23, 'SALIDA PARA EXTRACTOR DE HUMO', 'RECT.<br>100x50x40', '1.50', 'left'],
      ['fuerza', 23, 'SALIDA &nbsp; DE FUERZA', 'CUADRADA<br>100x40', '0.30', 'left'],
      ['tv', 23, 'SALIDA PARA ANTENA DE TV.', 'CUADRADA<br>100x50<br>TAPA 1 GANG', '0.30', 'left'],
      ['tel', 23, 'SALIDA PARA TELEFONO EXTERNO', 'RECT.<br>100x50x40', '0.30', 'left'],
      ['int', 20, 'SALIDA PARA TELEFONO INTERNO', 'RECT.<br>100x50x40', '0.30', 'center'],
      ['oct', 23, 'CAJA DE PASE OCTOGONAL', 'OCT.<br>100x40', '2.10', 'center'],
      ['cuad', 23, 'CAJA DE PASE CUADRADA (DIMENSION INDICADA)', '150x150x100', '0.30', 'center'],
      ['portero', 23, 'SALIDA PARA PORTERO ELECTRICO', 'ESPECIAL', '1.40', 'center'],
      ['timbre', 23, 'PULSADOR PARA TIMBRE', 'RECT.<br>100x50x40', '1.20', 'center'],
      ['campana', 23, 'CAMPANILLA TIMBRE CON TRANSFORMADOR DE 220/8V', 'RECT.<br>100x50x40', '2.25', 'center'],
      ['boton', 23, 'SALIDA PARA BOTONERA DE ENCENDIO Y APAGADO', 'ESPECIAL', '1.40', 'center'],
      ['pozo', 23, 'SALIDA PARA POZO A TIERRA', 'SUELO', null, 'center']
    ];

    const align = {
      left: 'justify-start pl-[17px]',
      edge: 'justify-start pl-[2px]',
      center: 'justify-center'
    };

    // The first row has no inner column lines
    document.querySelector('#mainTable tbody').innerHTML = mainRows.map(([symbol, height, text, box, level, side], i) => {
      const line = i === 0 ? 'border-b border-r border-b-black border-r-transparent p-0' : 'border-b border-r border-black p-0';
      const pad = i > 12 ? 'pl-2' : 'pl-[5px]';
      const drop = symbol === 'int' ? 'pt-[6px]' : i > 3 ? 'pt-[3px]' : '';
      return `
        <tr style="height:${height}px">
          <td class="${line}"><div class="flex h-0 items-center"><svg class="h-5 w-[79px] shrink-0 overflow-visible" viewBox="0 -10 79 20">${symbols[symbol]}</svg></div></td>
          <td class="${line}"><div class="flex h-0 items-center whitespace-nowrap ${pad} ${drop}"><span>${text}</span></div></td>
          <td class="${line}" colspan="${level ? 1 : 2}"><div class="flex h-0 items-center justify-center whitespace-nowrap text-center ${level ? 'w-[57px]' : 'w-[116px]'}"><span>${box}</span></div></td>
          ${level ? `<td class="border-b border-r border-black p-0"><div class="flex h-0 items-center ${align[side]}"><span>${level}</span></div></td>` : ''}
        </tr>`;
    }).join('');

    const leftRows = [
      ['(mm)', '(m)B.I.'], ['ESPECIAL', '1.80 &nbsp;B.S'], ['ESPECIAL', '1.50 &nbsp;B.S'], ['ESPECIAL', '1.00'],
      ['168x168x<br>p &nbsp;128mm', 'TECHO'], ['157x133x<br>h &nbsp;180mm', 'TECHO'], ['OCT.<br>100x40', '2.10'], ['ESPECIAL', '0.30']
    ];

    document.querySelector('#leftTable tbody').innerHTML = '<tr class="h-[23px]"><td class="border-b border-r border-black" colspan="3"></td></tr>' +
      leftRows.map(([size, level]) => `
        <tr class="h-[23px]">
          <td class="border-b border-r border-black p-0"></td>
          <td class="border-b border-r border-black p-0"><div class="flex h-0 w-[52px] items-center justify-center whitespace-nowrap pt-[3px] text-center"><span>${size}</span></div></td>
          <td class="border-b border-r border-black p-0"><div class="flex h-0 w-[52px] items-center justify-center whitespace-nowrap pt-[3px]"><span>${level}</span></div></td>
        </tr>`).join('');
  </script>

</body>

</html>
